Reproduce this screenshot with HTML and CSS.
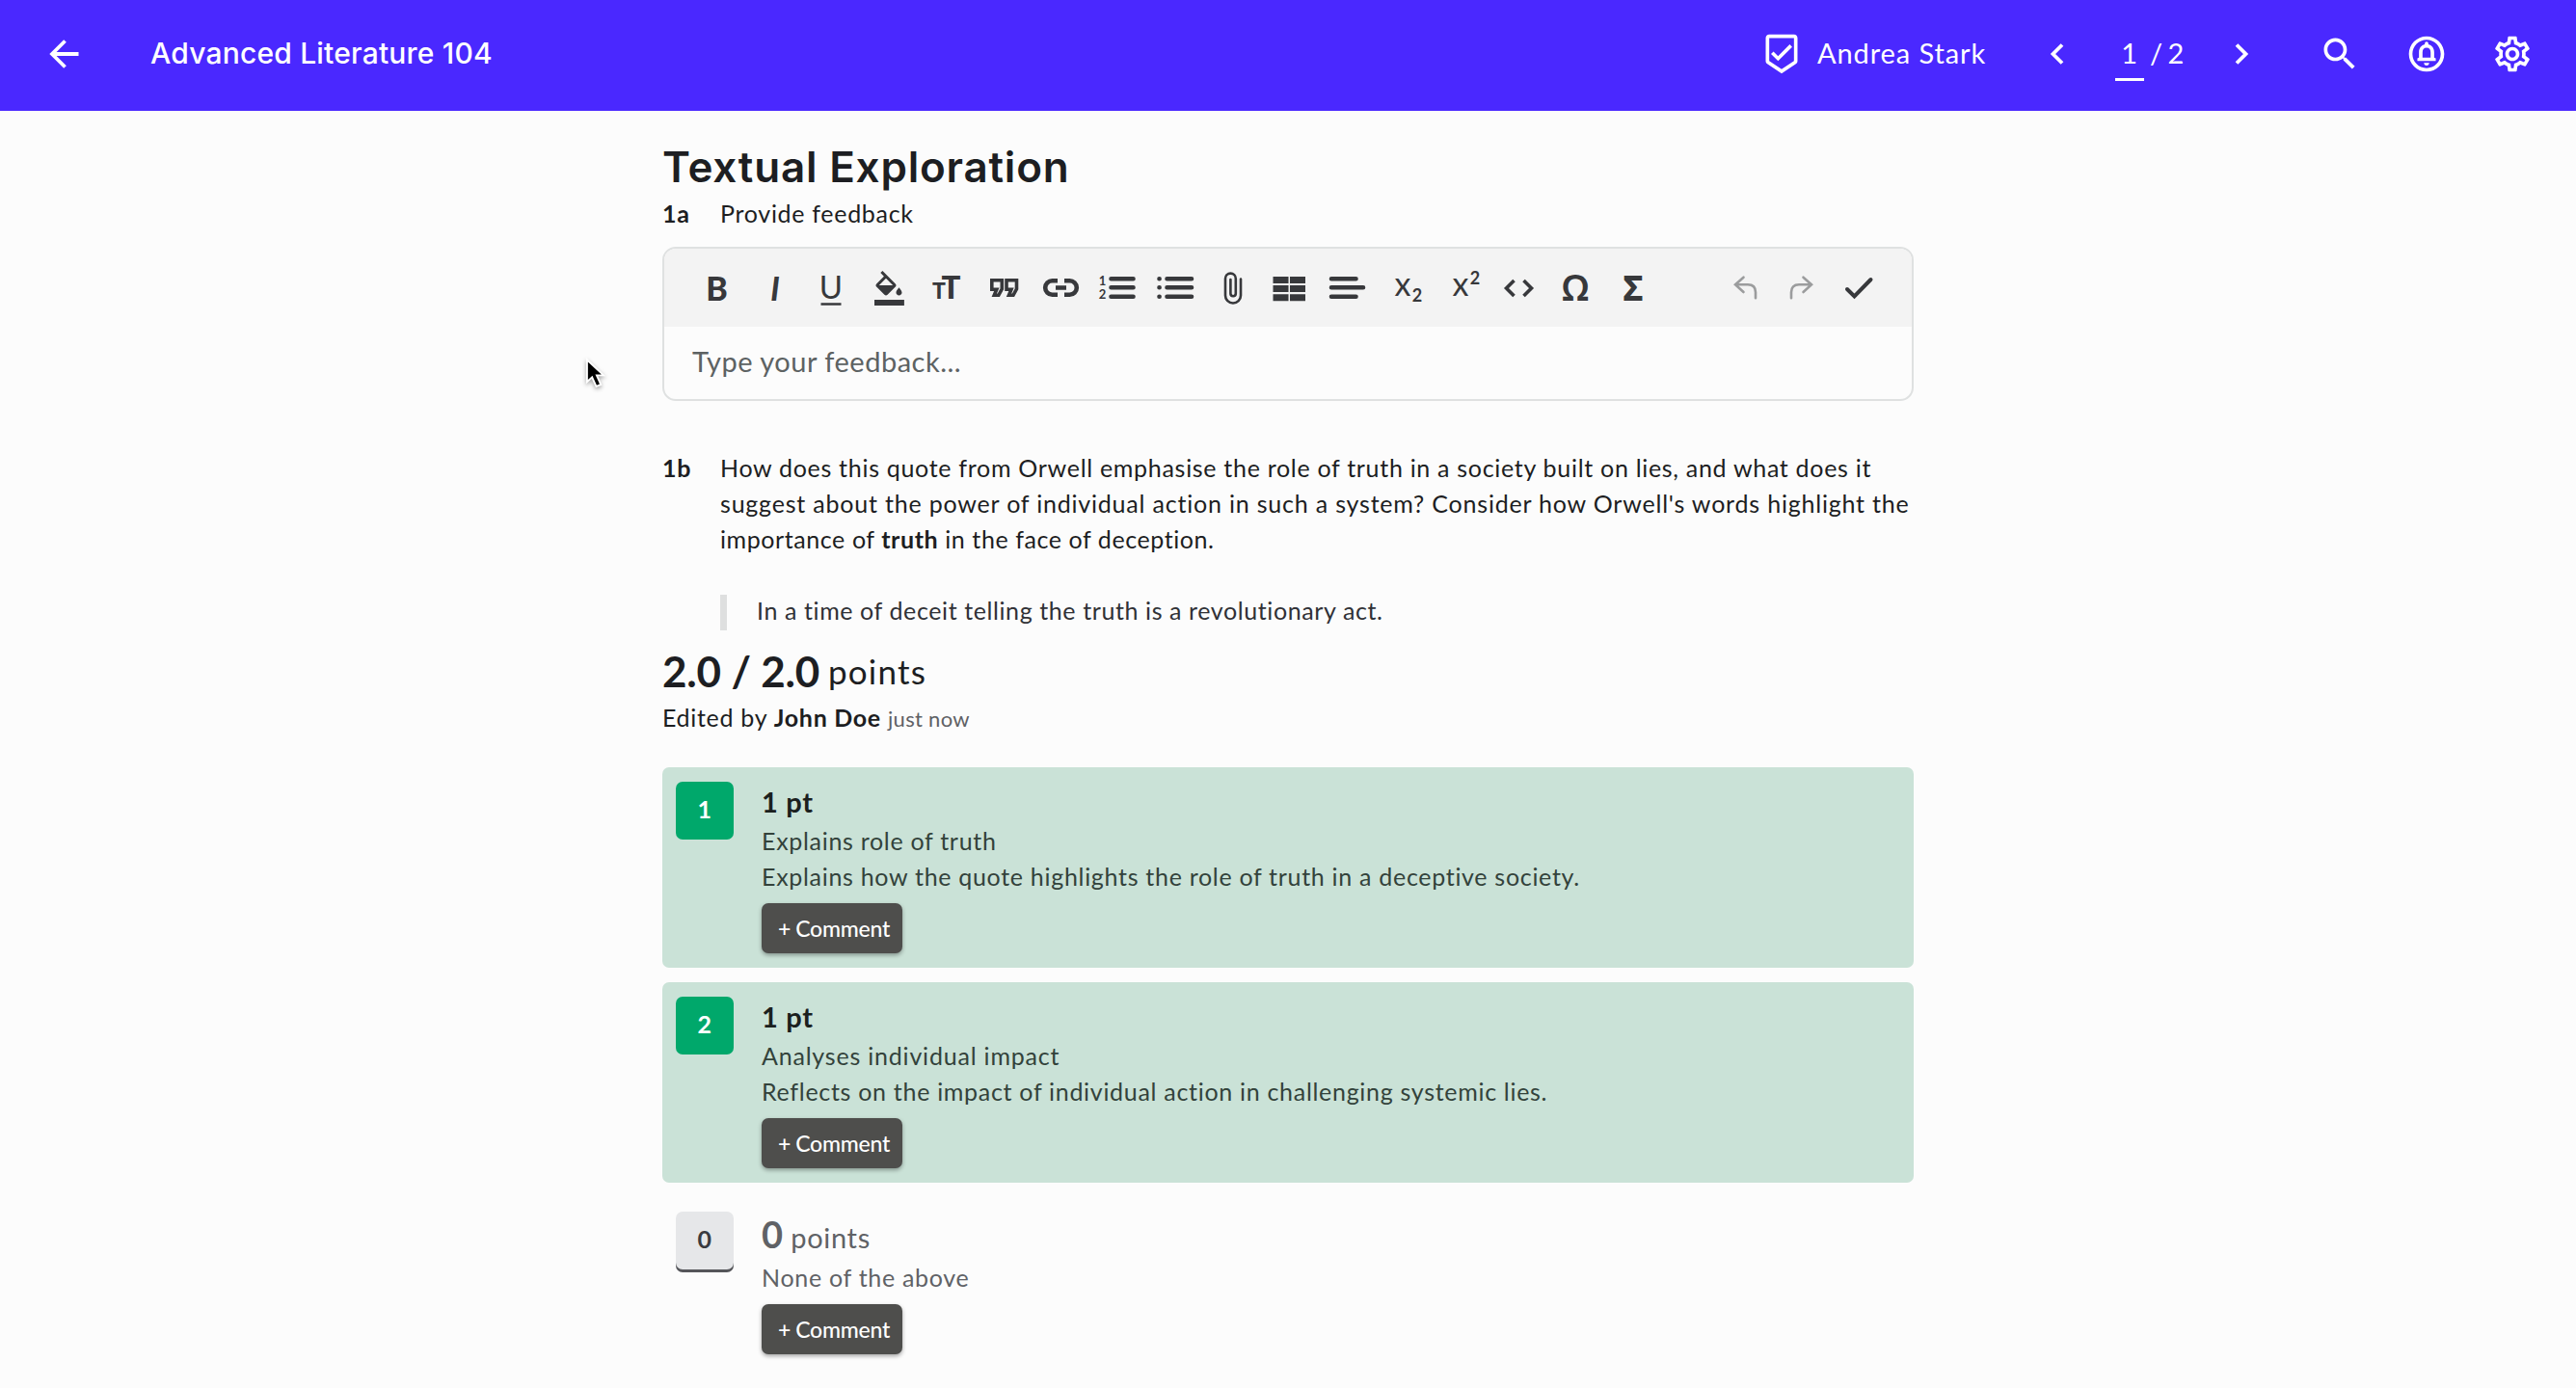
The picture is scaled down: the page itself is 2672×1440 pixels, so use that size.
FILE: index.html
```
<!DOCTYPE html>
<html lang="en">
  <head>
    <meta charset="UTF-8">
    <title>Advanced Literature 104</title>
    <link rel="stylesheet" href="styles.css">
  </head>
  <body>
    <header class="topbar">
      <svg class="icon back" viewBox="0 0 44 44"><path d="M36.5 22H10M22.5 8.5L9 22l13.5 13.5" fill="none" stroke="#fff" stroke-width="3.8"/></svg>
      <div class="course">Advanced Literature 104</div>
      <div class="student">
        <svg class="icon" viewBox="0 0 24 24"><path d="M19 1H5c-1.1 0-1.99.9-1.99 2L3 15.93c0 .69.35 1.3.88 1.66L12 23l8.11-5.41c.53-.36.88-.97.88-1.66L21 3c0-1.1-.9-2-2-2zm-7 19.6l-7-4.66V3h14v12.93l-7 4.67zm-2.01-7.42l-2.58-2.59L6 12l4 4 8-8-1.42-1.42z"/></svg>
        <span class="student-name">Andrea Stark</span>
      </div>
      <nav class="pager">
        <svg class="icon" viewBox="0 0 44 44"><path d="M27 12.5L17.5 22l9.5 9.5" fill="none" stroke="#fff" stroke-width="3.8"/></svg>
        <div class="pages"><span class="page-current">1</span><span class="page-total">/ 2</span></div>
        <svg class="icon" viewBox="0 0 44 44"><path d="M17 12.5l9.5 9.5-9.5 9.5" fill="none" stroke="#fff" stroke-width="3.8"/></svg>
      </nav>
      <div class="actions">
        <svg class="icon" viewBox="0 0 24 24"><path d="M15.5 14h-.79l-.28-.27C15.41 12.59 16 11.11 16 9.5 16 5.91 13.09 3 9.5 3S3 5.91 3 9.5 5.91 16 9.5 16c1.61 0 3.09-.59 4.23-1.57l.27.28v.79l5 4.99L20.49 19l-4.99-5zm-6 0C7.01 14 5 11.99 5 9.5S7.01 5 9.5 5 14 7.01 14 9.5 11.99 14 9.5 14z"/></svg>
        <svg class="icon" viewBox="0 0 24 24"><path d="M12 2C6.48 2 2 6.48 2 12s4.48 10 10 10 10-4.48 10-10S17.52 2 12 2zm0 18c-4.41 0-8-3.59-8-8s3.59-8 8-8 8 3.59 8 8-3.59 8-8 8z"/><path d="M12 18.5c.83 0 1.5-.67 1.5-1.5h-3c0 .83.67 1.5 1.5 1.5zM16.3 14v-3c0-2.2-1.3-3.9-3.3-4.4V6a1 1 0 0 0-2 0v.6C9 7.1 7.7 8.8 7.7 11v3L6.8 14.5V16h10.4v-1.5zM14.3 14H9.7v-3c0-1.5.8-2.6 2.3-2.6s2.3 1.1 2.3 2.6z"/></svg>
        <svg class="icon" viewBox="0 0 24 24"><path d="M19.43 12.98c.04-.32.07-.64.07-.98s-.03-.66-.07-.98l2.11-1.65c.19-.15.24-.42.12-.64l-2-3.46c-.09-.16-.26-.25-.44-.25-.06 0-.12.01-.17.03l-2.49 1c-.52-.4-1.08-.73-1.69-.98l-.38-2.65C14.46 2.18 14.25 2 14 2h-4c-.25 0-.46.18-.49.42l-.38 2.65c-.61.25-1.17.59-1.69.98l-2.49-1c-.06-.02-.12-.03-.18-.03-.17 0-.34.09-.43.25l-2 3.46c-.13.22-.07.49.12.64l2.11 1.65c-.04.32-.07.65-.07.98s.03.66.07.98l-2.11 1.65c-.19.15-.24.42-.12.64l2 3.46c.09.16.26.25.44.25.06 0 .12-.01.17-.03l2.49-1c.52.4 1.08.73 1.69.98l.38 2.65c.03.24.24.42.49.42h4c.25 0 .46-.18.49-.42l.38-2.65c.61-.25 1.17-.59 1.69-.98l2.49 1c.06.02.12.03.18.03.17 0 .34-.09.43-.25l2-3.46c.12-.22.07-.49-.12-.64l-2.11-1.65zm-1.98-1.71c.04.31.05.52.05.73 0 .21-.02.43-.05.73l-.14 1.13.89.7 1.08.84-.7 1.21-1.27-.51-1.04-.42-.9.68c-.43.32-.84.56-1.25.73l-1.06.43-.16 1.13-.2 1.35h-1.4l-.19-1.35-.16-1.13-1.06-.43c-.43-.18-.83-.41-1.23-.71l-.91-.7-1.06.43-1.27.51-.7-1.21 1.08-.84.89-.7-.14-1.13c-.03-.31-.05-.54-.05-.74s.02-.43.05-.73l.14-1.13-.89-.7-1.08-.84.7-1.21 1.27.51 1.04.42.9-.68c.43-.32.84-.56 1.25-.73l1.06-.43.16-1.13.2-1.35h1.39l.19 1.35.16 1.13 1.06.43c.43.18.83.41 1.23.71l.91.7 1.06-.43 1.27-.51.7 1.21-1.07.85-.89.7.14 1.13zM12 8c-2.21 0-4 1.79-4 4s1.79 4 4 4 4-1.79 4-4-1.79-4-4-4zm0 6c-1.1 0-2-.9-2-2s.9-2 2-2 2 .9 2 2-.9 2-2 2z"/></svg>
      </div>
    </header>

    <main class="content">
      <h1 class="title">Textual Exploration</h1>
      <div class="question">
        <span class="question-no">1a</span>
        <div class="question-text">Provide feedback</div>
      </div>

      <div class="editor">
        <div class="toolbar">
          <svg class="tool" viewBox="0 0 44 44"><text x="21.5" y="35" class="t-bold">B</text></svg>
          <svg class="tool" viewBox="0 0 44 44"><text x="23" y="35" class="t-italic">I</text></svg>
          <svg class="tool" viewBox="0 0 44 44"><text x="22" y="33" class="t-under">U</text><path d="M11.5 38.5h21" class="thin"/></svg>
          <svg class="tool" viewBox="0 0 44 44"><path transform="translate(4 4) scale(1.5)" d="M16.56 8.94L7.62 0 6.21 1.41l2.38 2.38-5.15 5.15c-.59.59-.59 1.54 0 2.12l5.5 5.5c.29.29.68.44 1.06.44s.77-.15 1.06-.44l5.5-5.5c.59-.58.59-1.53 0-2.12zM5.21 10L10 5.21 14.79 10H5.21zM19 11.5s-2 2.17-2 3.5c0 1.1.9 2 2 2s2-.9 2-2c0-1.33-2-3.5-2-3.5zM2 20h20.6v4H2z"/></svg>
          <svg class="tool" viewBox="0 0 44 44"><text x="15" y="33" class="t-size-s">T</text><text x="27.5" y="33" class="t-size-l">T</text></svg>
          <svg class="tool" viewBox="0 0 44 44"><path d="M9.8 13.8h10.5v9l-3.5 6.5h-4.5l2.5-6h-5zM25 13.8h10.5v9L32 29.3h-4.5l2.5-6h-5z" class="mid"/></svg>
          <svg class="tool" viewBox="0 0 44 44"><path d="M19 14.2h-5.5a7.3 7.3 0 0 0 0 14.6H19M26 14.2h5.5a7.3 7.3 0 0 1 0 14.6H26M17 21.5h11" class="thick"/></svg>
          <svg class="tool" viewBox="0 0 44 44"><text x="6.5" y="18.5" class="t-num">1</text><text x="6.5" y="33" class="t-num">2</text><path d="M15.5 12.2h23M15.5 21.3h23M15.5 30.7h23" class="thick round"/></svg>
          <svg class="tool" viewBox="0 0 44 44"><path d="M5.5 12.2h.1M5.5 21.3h.1M5.5 30.7h.1M13.5 12.2H39M13.5 21.3H39M13.5 30.7H39" class="thick round"/></svg>
          <svg class="tool" viewBox="0 0 44 44"><path d="M31 12.5v17a8 8 0 0 1-16 0V12a5.3 5.3 0 0 1 10.8 0v15.5a2.7 2.7 0 0 1-5.4 0V13" class="thin round"/></svg>
          <svg class="tool" viewBox="0 0 44 44"><path d="M5.5 10h16v7h-16zM23 10h16v7H23zM5.5 19h16v7h-16zM23 19h16v7H23zM5.5 28.3h16v7h-16zM23 28.3h16v7H23z"/></svg>
          <svg class="tool" viewBox="0 0 44 44"><path d="M6 12.2h25.5M6 21.3h33M6 30.7h25.5" class="thick round"/></svg>
          <svg class="tool" viewBox="0 0 44 44"><text x="21" y="30" class="t-x">x</text><text x="36" y="36" class="t-script">2</text></svg>
          <svg class="tool" viewBox="0 0 44 44"><text x="21" y="30" class="t-x">x</text><text x="36" y="18" class="t-script">2</text></svg>
          <svg class="tool" viewBox="0 0 44 44"><path d="M17.5 14l-8 8 8 8M27.5 14l8 8-8 8" class="mid"/></svg>
          <svg class="tool" viewBox="0 0 44 44"><text x="22" y="35" class="t-omega">Ω</text></svg>
          <svg class="tool" viewBox="0 0 44 44"><text x="22" y="34.5" class="t-sigma">Σ</text></svg>
          <div class="spacer"></div>
          <svg class="tool muted" viewBox="0 0 44 44"><path d="M20.500 10.700L12 18.300l8.500 7.700M12 18.300h13q8 0 8 8v6" class="thin round"/></svg>
          <svg class="tool muted" viewBox="0 0 44 44"><path d="M23.5 10.7l8.5 7.6-8.5 7.7M32 18.3H19q-8 0-8 8v6" class="thin round"/></svg>
          <svg class="tool" viewBox="0 0 44 44"><path d="M10 23l7.5 7.5L34.5 13" class="check round"/></svg>
        </div>
        <div class="editor-body">Type your feedback...</div>
      </div>

      <div class="question prompt">
        <span class="question-no">1b</span>
        <div class="question-text">
          <p>How does this quote from Orwell emphasise the role of truth in a society built on lies, and what does it <span class="wide">suggest about the power of individual action in such a system? Consider how Orwell's words highlight the</span> <span class="tight">importance of <b>truth</b> in the face of deception.</span></p>
          <blockquote>In a time of deceit telling the truth is a revolutionary act.</blockquote>
        </div>
      </div>

      <div class="score"><span class="score-value">2.0 / 2.0</span><span class="score-unit">points</span></div>
      <div class="edited">Edited by <b>John Doe</b> <span class="when">just now</span></div>

      <section class="rubric">
        <div class="row selected">
          <div class="key">1</div>
          <div class="details">
            <div class="points">1 pt</div>
            <p>Explains role of truth</p>
            <p>Explains how the quote highlights the role of truth in a deceptive society.</p>
            <button class="comment"><span>+</span><span>Comment</span></button>
          </div>
        </div>
        <div class="row selected">
          <div class="key">2</div>
          <div class="details">
            <div class="points">1 pt</div>
            <p class="wide">Analyses individual impact</p>
            <p>Reflects on the impact of individual action in challenging systemic lies.</p>
            <button class="comment"><span>+</span><span>Comment</span></button>
          </div>
        </div>
        <div class="row none">
          <div class="key">0</div>
          <div class="details">
            <div class="points"><span class="zero">0</span> points</div>
            <p>None of the above</p>
            <button class="comment"><span>+</span><span>Comment</span></button>
          </div>
        </div>
      </section>
    </main>

    <svg class="cursor" viewBox="0 0 22 34"><path d="M2 2v24l5.5-5 4.5 10 5-2-4.5-10H20z"/></svg>
  </body>
</html>
```
FILE: styles.css
```
* {
  box-sizing: border-box;
}

body {
  margin: 0;
  height: 1440px;
  overflow: hidden;
  background-color: #fcfcfc;
  color: #1d1e22;
  font-family: Lato, "Open Sans", sans-serif;
  font-size: 25px;
  line-height: 37px;
  letter-spacing: 0.7px;
}

p,
h1,
blockquote {
  margin: 0;
}

.wide {
  letter-spacing: 0.8px;
}

.tight {
  letter-spacing: 0.58px;
}

.topbar {
  display: flex;
  align-items: center;
  height: 115px;
  padding: 0 44px 4px 45px;
  background-color: #4a28ff;
  color: #fff;
  font-size: 29px;
}

.icon {
  display: block;
  flex: none;
  width: 44px;
  height: 44px;
  fill: #fff;
}

.course {
  margin-left: 67px;
  font-family: Inter, sans-serif;
  font-size: 30px;
  font-weight: 500;
  letter-spacing: 0.2px;
}

.student {
  display: flex;
  align-items: center;
  gap: 15px;
  width: 286px;
  margin-left: auto;
}

.student-name {
  padding-bottom: 3px;
  letter-spacing: 0.9px;
}

.pager {
  display: flex;
  align-items: center;
  width: 293px;
}

.pages {
  display: flex;
  width: 147px;
  padding-left: 38px;
}

.page-current {
  width: 30px;
  height: 56px;
  padding-top: 8px;
  margin-right: 6px;
  border-bottom: 3px solid #fff;
  text-align: center;
}

.page-total {
  padding-top: 8px;
  letter-spacing: -1px;
}

.actions {
  display: flex;
  gap: 45.5px;
}

.content {
  width: 1298px;
  margin: 0 auto;
}

.title {
  padding-top: 29px;
  font-family: Inter, sans-serif;
  font-size: 44px;
  font-weight: 600;
  line-height: 59px;
  letter-spacing: 0.8px;
}

.question {
  display: flex;
}

.question-no {
  flex: none;
  width: 60px;
  font-weight: 700;
}

.editor {
  margin-top: 16px;
  height: 160px;
  border: 2px solid #dfe1e1;
  border-radius: 14px;
  overflow: hidden;
}

.toolbar {
  display: flex;
  height: 81px;
  padding: 19px 25px 0;
  background-color: #f3f3f3;
}

.tool {
  flex: none;
  width: 44px;
  height: 44px;
  margin: 0 7.7px;
  fill: #37383b;
  overflow: visible;
}

.tool path[class] {
  fill: none;
  stroke: #37383b;
}

.tool.muted path[class] {
  stroke: #9b9c9d;
}

.tool path.thin {
  stroke-width: 2.6;
}

.tool path.mid {
  stroke-width: 3.6;
}

.tool path.check {
  stroke-width: 4;
}

.tool path.thick {
  stroke-width: 4.6;
}

.tool path.round {
  stroke-linecap: round;
}

.tool text {
  font-family: Lato, sans-serif;
  letter-spacing: 0;
  text-anchor: middle;
}

.tool .t-bold {
  font-size: 34px;
  font-weight: 900;
}

.tool .t-italic {
  font-size: 35px;
  font-style: italic;
  font-weight: 700;
}

.tool .t-under {
  font-size: 33px;
}

.tool .t-size-s {
  font-size: 23px;
  font-weight: 900;
}

.tool .t-size-l {
  font-size: 33px;
  font-weight: 900;
}

.tool .t-num {
  font-size: 13px;
  font-weight: 700;
}

.tool .t-x {
  font-size: 34px;
}

.tool .t-script {
  font-size: 18px;
  font-weight: 700;
}

.tool .t-omega {
  font-family: "Noto Sans", sans-serif;
  font-size: 38px;
  font-weight: 600;
}

.tool .t-sigma {
  font-family: "Noto Sans", sans-serif;
  font-size: 35px;
  font-weight: 800;
}

.spacer {
  flex: 1;
}

.editor-body {
  padding: 17px 29px;
  color: #5d6263;
  font-size: 29px;
  letter-spacing: 0.5px;
}

.prompt {
  margin-top: 51px;
}

blockquote {
  margin-top: 39px;
  padding: 0 0 4px 31px;
  border-left: 7px solid #dedfdf;
  color: #303136;
  line-height: 33px;
  letter-spacing: 0.6px;
}

.score {
  display: flex;
  align-items: flex-start;
  margin: 13px 0 1px;
  line-height: 58px;
}

.score-value {
  width: 172px;
  font-size: 44px;
  font-weight: 700;
  letter-spacing: -0.2px;
}

.score-unit {
  font-size: 35px;
  letter-spacing: 1.2px;
}

.when {
  color: #5f6165;
  font-size: 22px;
  letter-spacing: 0.3px;
}

.rubric {
  display: flex;
  flex-direction: column;
  gap: 15px;
  margin-top: 32px;
}

.row {
  display: flex;
  gap: 29px;
  height: 208px;
  padding: 15px 14px;
  border-radius: 7px;
}

.selected {
  background-color: #cae2d7;
}

.key {
  width: 60px;
  height: 60px;
  border-radius: 7px;
  background-color: #00a86b;
  color: #fff;
  font-weight: 700;
  line-height: 57px;
  text-align: center;
}

.none .key {
  background-color: #e6e7e9;
  box-shadow: 0 3px 0 #55565a;
  color: #3a3b3f;
}

.details {
  color: #33423b;
}

.points {
  height: 43px;
  color: #1b201e;
  font-size: 29px;
  font-weight: 700;
  line-height: 42px;
}

.none .details,
.none .points {
  color: #606266;
}

.none .points {
  height: 50px;
  font-weight: 400;
  line-height: 47px;
}

.zero {
  font-size: 38px;
  font-weight: 700;
  letter-spacing: 0;
}

.comment {
  display: flex;
  align-items: center;
  gap: 5px;
  height: 52px;
  margin-top: 9px;
  padding: 0 13px 0 17px;
  border: none;
  border-radius: 7px;
  background-color: #4e4e4c;
  box-shadow: 0 2px 4px rgba(0, 0, 0, 0.35);
  color: #fff;
  font-family: inherit;
  font-size: 23px;
  font-weight: 500;
  letter-spacing: -0.2px;
}

.cursor {
  position: absolute;
  left: 607px;
  top: 371px;
  width: 21px;
  height: 33px;
  fill: #000;
  stroke: #fff;
  stroke-width: 2;
  filter: drop-shadow(0 2px 2px rgba(0, 0, 0, 0.35));
}
```
